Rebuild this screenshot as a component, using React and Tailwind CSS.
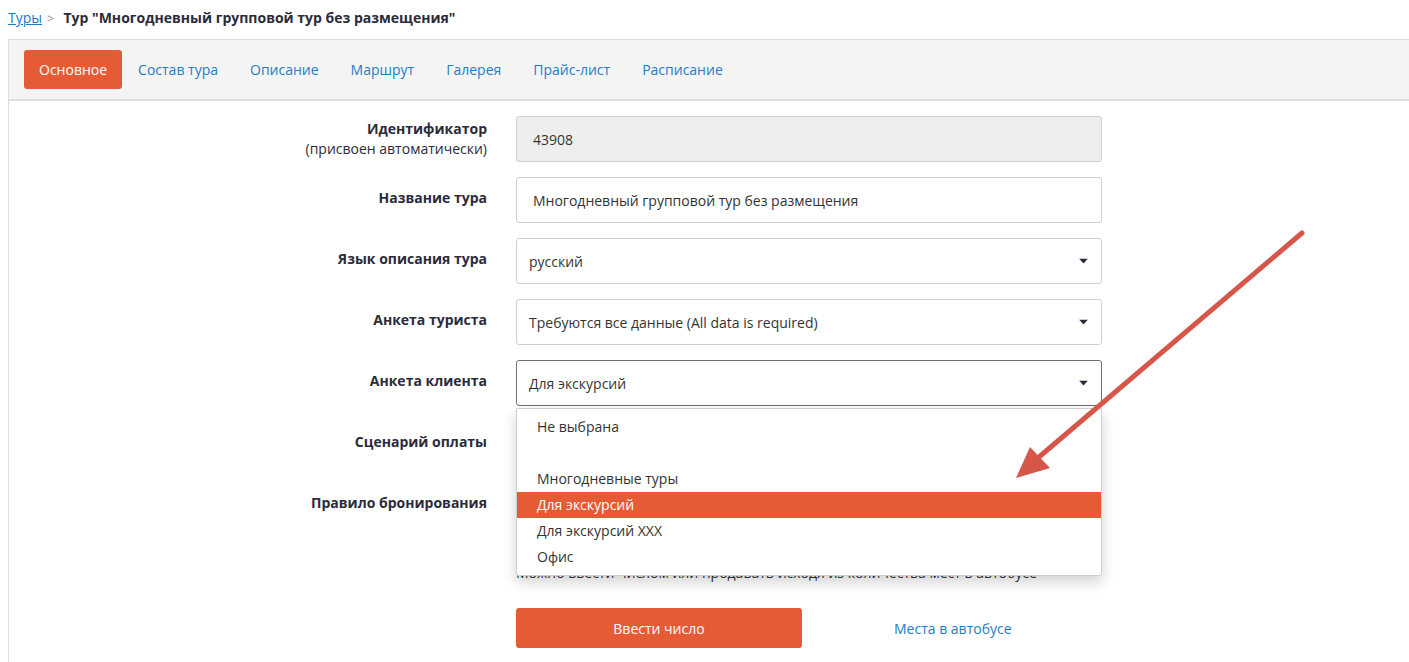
import React from 'react'

const tabs = ['Состав тура', 'Описание', 'Маршрут', 'Галерея', 'Прайс-лист', 'Расписание']

const options = ['Не выбрана', '', 'Многодневные туры', 'Для экскурсий', 'Для экскурсий XXX', 'Офис']

function Caret() {
  return (
    <svg width="9" height="5" viewBox="0 0 9 5" className="absolute right-[13px] top-1/2 -translate-y-1/2">
      <path d="M0 0 L9 0 L4.5 5 Z" fill="#2b2b3a" />
    </svg>
  )
}

function Row({ label, sub, children }) {
  return (
    <div className="flex items-start">
      <div className={`w-[478px] shrink-0 text-right leading-[20px] ${sub ? 'pt-[3px]' : 'pt-[11px]'}`}>
        <div className="font-bold text-[14px] text-[#2b2b3a]">{label}</div>
        {sub && <div className="text-[14px] text-[#2b2b3a]">{sub}</div>}
      </div>
      <div className="ml-[29px] w-[586px] relative">{children}</div>
    </div>
  )
}

function Select({ value, focused, children }) {
  return (
    <div
      className={`relative h-[46px] flex items-center pl-[12px] rounded-[3px] border bg-white text-[14px] text-[#333] ${
        focused ? 'border-[#70707a]' : 'border-[#d0d0d0]'
      }`}
    >
      {value}
      <Caret />
      {children}
    </div>
  )
}

export default function App() {
  return (
    <div className="relative w-[1409px] h-[662px] overflow-hidden bg-white font-['Open_Sans',sans-serif] text-[14px]">
      {/* Breadcrumbs */}
      <div className="pt-[9px] pl-[8px] leading-[18px] flex items-center">
        <a className="text-[#1a7bc9] underline text-[14px]">Туры</a>
        <span className="text-[#9a9a9a] ml-[5px] text-[13px]">&gt;</span>
        <span className="ml-[9px] font-bold text-[#2b2b3a] text-[14px]">
          Тур "Многодневный групповой тур без размещения"
        </span>
      </div>

      {/* Panel */}
      <div className="mt-[12px] ml-[8px] border-l border-t border-[#dcdcdc] h-[700px]">
        {/* Tabs */}
        <div className="bg-[#f4f4f4] border-b-2 border-[#dddddd] pl-[15px] pt-[10px] pb-[10px] flex items-center">
          <div className="h-[39px] px-[15px] flex items-center rounded-[3px] bg-[#e55b36] text-white">Основное</div>
          {tabs.map((t) => (
            <div key={t} className="h-[39px] px-[16px] flex items-center text-[#1e7cc8]">
              {t}
            </div>
          ))}
        </div>

        {/* Form */}
        <div className="pt-[15px] flex flex-col gap-[15px]">
          <Row label="Идентификатор" sub="(присвоен автоматически)">
            <div className="h-[46px] flex items-center pl-[16px] rounded-[3px] border border-[#d0d0d0] bg-[#eeeeee] text-[#333]">
              43908
            </div>
          </Row>
          <Row label="Название тура">
            <div className="h-[46px] flex items-center pl-[16px] rounded-[3px] border border-[#d0d0d0] bg-white text-[#333]">
              Многодневный групповой тур без размещения
            </div>
          </Row>
          <Row label="Язык описания тура">
            <Select value="русский" />
          </Row>
          <Row label="Анкета туриста">
            <Select value="Требуются все данные (All data is required)" />
          </Row>
          <Row label="Анкета клиента">
            <Select value="Для экскурсий" focused>
              {/* open option list */}
              <div className="absolute z-10 left-[-1px] top-[47px] w-[586px] bg-white border border-[#cfcfcf] rounded-b-[3px] shadow-[0_6px_14px_rgba(0,0,0,0.18)] py-[5px]">
                {options.map((o, i) => (
                  <div
                    key={i}
                    className={`h-[26px] leading-[26px] pl-[20px] ${
                      o === 'Для экскурсий' ? 'bg-[#e55b36] text-white' : 'text-[#333]'
                    }`}
                  >
                    {o}
                  </div>
                ))}
              </div>
            </Select>
          </Row>
          <Row label="Сценарий оплаты">
            <Select value="" />
          </Row>
          <Row label="Правило бронирования">
            <Select value="" />
          </Row>
        </div>

        <div className="ml-[507px] mt-[35px] leading-[20px] text-[#333]">
          Можно ввести числом или продавать исходя из количества мест в автобусе
        </div>

        <div className="ml-[507px] mt-[25px] flex items-center">
          <div className="w-[286px] h-[40px] rounded-[3px] bg-[#e55b36] text-white flex items-center justify-center">
            Ввести число
          </div>
          <a className="ml-[92px] text-[#1e7cc8]">Места в автобусе</a>
        </div>
      </div>

      {/* Annotation arrow */}
      <svg className="absolute left-0 top-0 pointer-events-none z-20" width="1409" height="662">
        <line x1="1302" y1="233" x2="1032" y2="463" stroke="#d6574a" strokeWidth="5" strokeLinecap="round" />
        <path d="M1016 478 L1030 447 L1050 468 Z" fill="#d6574a" />
      </svg>
    </div>
  )
}
